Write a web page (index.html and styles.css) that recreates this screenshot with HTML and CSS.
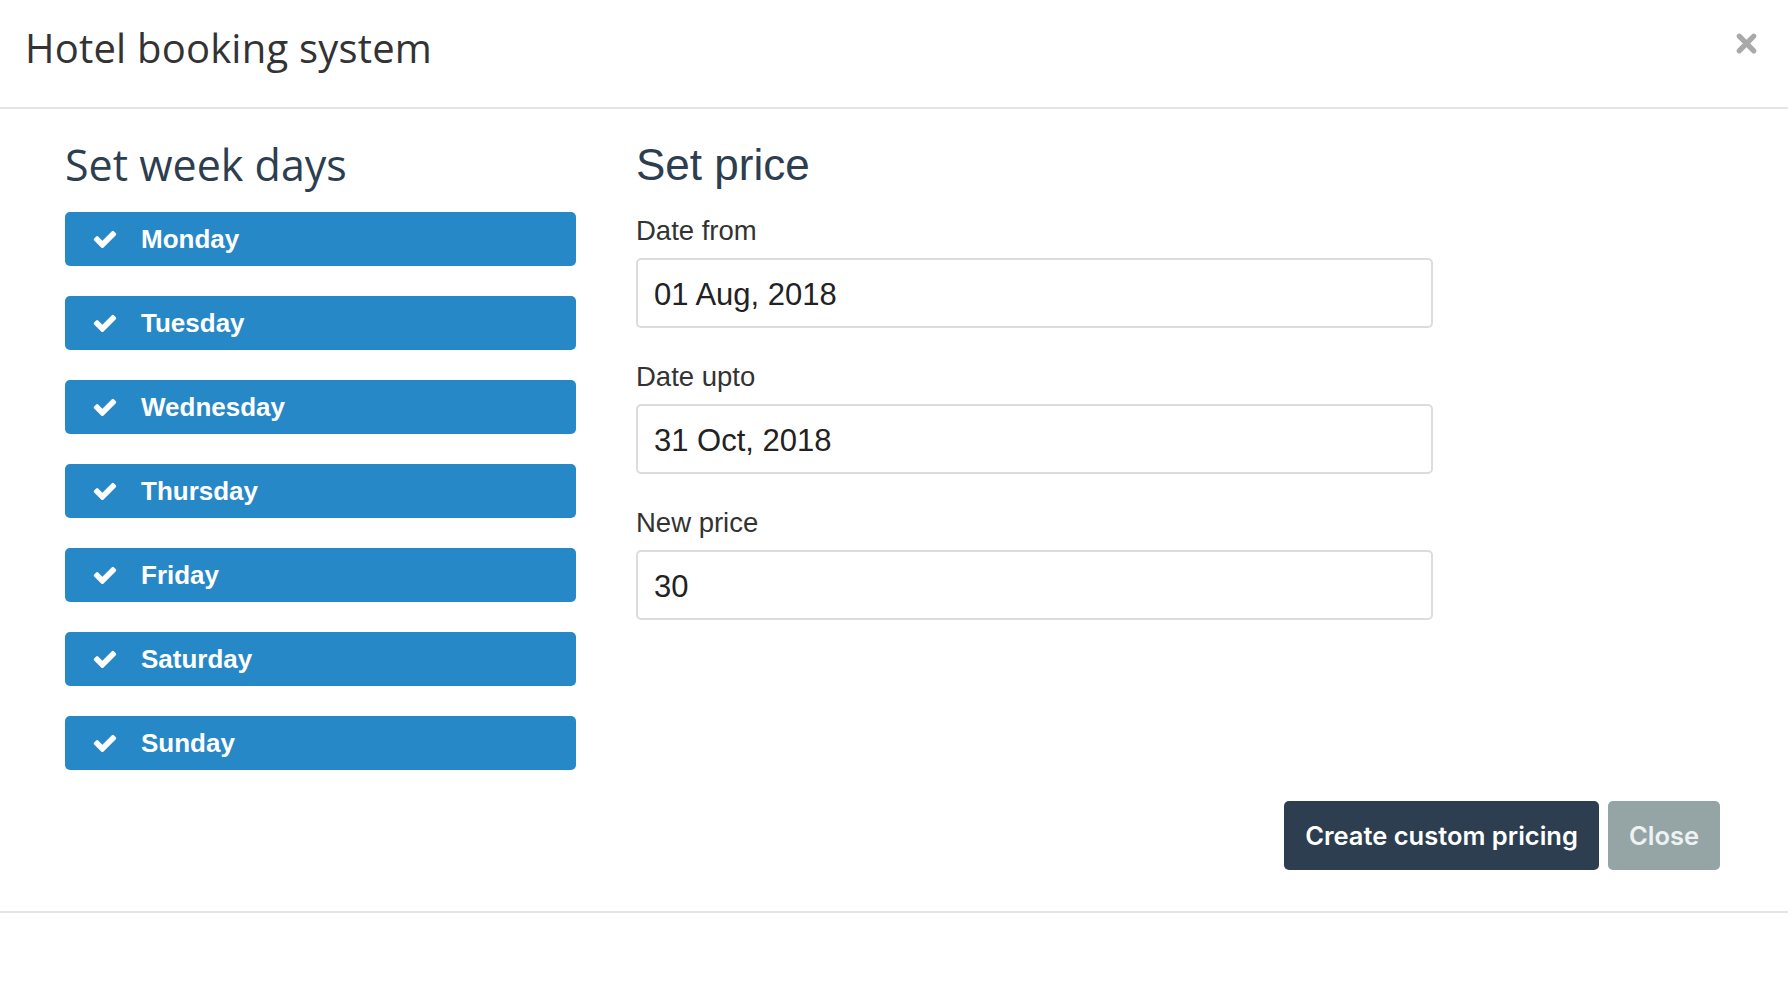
FILE: index.html
```html
<!DOCTYPE html>
<html>
<head>
<meta charset="utf-8">
<link rel="stylesheet" href="styles.css">
</head>
<body>
<div class="modal">
  <div class="modal-header">
    <h1 class="modal-title">Hotel booking system</h1>
    <button class="close-x" aria-label="Close">
      <svg viewBox="0 0 22 22" width="23" height="23"><path d="M4 4 L18 18 M18 4 L4 18" stroke="#a9a9a9" stroke-width="5" stroke-linecap="round"/></svg>
    </button>
  </div>
  <div class="modal-body">
    <div class="columns">
      <div class="col-days">
        <h2 class="section-title poppins">Set week days</h2>
        <div class="day-list">
          <div class="day-btn"><svg class="check" viewBox="0 0 1792 1792"><path d="M1671 566q0 40-28 68l-724 724-136 136q-28 28-68 28t-68-28l-136-136-362-362q-28-28-28-68t28-68l136-136q28-28 68-28t68 28l294 295 656-657q28-28 68-28t68 28l136 136q28 28 28 68z"/></svg><span>Monday</span></div>
          <div class="day-btn"><svg class="check" viewBox="0 0 1792 1792"><path d="M1671 566q0 40-28 68l-724 724-136 136q-28 28-68 28t-68-28l-136-136-362-362q-28-28-28-68t28-68l136-136q28-28 68-28t68 28l294 295 656-657q28-28 68-28t68 28l136 136q28 28 28 68z"/></svg><span>Tuesday</span></div>
          <div class="day-btn"><svg class="check" viewBox="0 0 1792 1792"><path d="M1671 566q0 40-28 68l-724 724-136 136q-28 28-68 28t-68-28l-136-136-362-362q-28-28-28-68t28-68l136-136q28-28 68-28t68 28l294 295 656-657q28-28 68-28t68 28l136 136q28 28 28 68z"/></svg><span>Wednesday</span></div>
          <div class="day-btn"><svg class="check" viewBox="0 0 1792 1792"><path d="M1671 566q0 40-28 68l-724 724-136 136q-28 28-68 28t-68-28l-136-136-362-362q-28-28-28-68t28-68l136-136q28-28 68-28t68 28l294 295 656-657q28-28 68-28t68 28l136 136q28 28 28 68z"/></svg><span>Thursday</span></div>
          <div class="day-btn"><svg class="check" viewBox="0 0 1792 1792"><path d="M1671 566q0 40-28 68l-724 724-136 136q-28 28-68 28t-68-28l-136-136-362-362q-28-28-28-68t28-68l136-136q28-28 68-28t68 28l294 295 656-657q28-28 68-28t68 28l136 136q28 28 28 68z"/></svg><span>Friday</span></div>
          <div class="day-btn"><svg class="check" viewBox="0 0 1792 1792"><path d="M1671 566q0 40-28 68l-724 724-136 136q-28 28-68 28t-68-28l-136-136-362-362q-28-28-28-68t28-68l136-136q28-28 68-28t68 28l294 295 656-657q28-28 68-28t68 28l136 136q28 28 28 68z"/></svg><span>Saturday</span></div>
          <div class="day-btn"><svg class="check" viewBox="0 0 1792 1792"><path d="M1671 566q0 40-28 68l-724 724-136 136q-28 28-68 28t-68-28l-136-136-362-362q-28-28-28-68t28-68l136-136q28-28 68-28t68 28l294 295 656-657q28-28 68-28t68 28l136 136q28 28 28 68z"/></svg><span>Sunday</span></div>
        </div>
      </div>
      <div class="col-price">
        <h2 class="section-title">Set price</h2>
        <div class="field">
          <label class="field-label">Date from</label>
          <div class="field-input">01 Aug, 2018</div>
        </div>
        <div class="field">
          <label class="field-label">Date upto</label>
          <div class="field-input">31 Oct, 2018</div>
        </div>
        <div class="field">
          <label class="field-label">New price</label>
          <div class="field-input">30</div>
        </div>
      </div>
    </div>
    <div class="actions">
      <button class="btn btn-dark">Create custom pricing</button>
      <button class="btn btn-gray">Close</button>
    </div>
  </div>
</div>
</body>
</html>
```

FILE: styles.css
```css
html, body {
  margin: 0;
  padding: 0;
  background: #fff;
}
body {
  font-family: "Liberation Sans", Arial, sans-serif;
  color: #333;
}
.modal {
  width: 100%;
}
.modal-header {
  height: 107px;
  border-bottom: 2px solid #e5e5e5;
  display: flex;
  align-items: center;
  justify-content: space-between;
  padding: 0 30px 0 25px;
  box-sizing: content-box;
}
.modal-title {
  margin: 0 0 12px 0;
  font-family: "Open Sans", sans-serif;
  font-weight: 400;
  font-size: 40px;
  color: #333;
  letter-spacing: 0.2px;
}
.close-x {
  border: 0;
  background: none;
  padding: 0;
  margin-bottom: 20px;
  width: 23px;
  height: 23px;
}
.modal-body {
  padding: 32px 68px 0 65px;
  border-bottom: 2px solid #e5e5e5;
}
.columns {
  display: flex;
  gap: 60px;
}
.col-days {
  width: 511px;
}
.col-price {
  width: 797px;
}
.section-title {
  margin: 0 0 23px 0;
  font-size: 44px;
  line-height: 48px;
  font-weight: 400;
  color: #2c3e50;
}
.poppins {
  font-family: "Open Sans", sans-serif;
  font-size: 43px;
}
.day-list {
  display: flex;
  flex-direction: column;
  gap: 30px;
}
.day-btn {
  height: 54px;
  background: #2788c8;
  border-radius: 5px;
  display: flex;
  align-items: center;
  color: #fff;
  font-weight: 700;
  font-size: 26px;
}
.check {
  width: 26px;
  height: 26px;
  fill: #fff;
  margin-left: 27px;
  margin-right: 23px;
}
.field {
  display: flex;
  flex-direction: column;
  margin-bottom: 30px;
}
.field-label {
  font-size: 27.5px;
  line-height: 34px;
  color: #333;
  margin-top: 2px;
  margin-bottom: 10px;
}
.field-input {
  height: 62px;
  border: 2px solid #dcdcdc;
  border-radius: 5px;
  display: flex;
  align-items: center;
  padding: 4px 0 0 16px;
  font-size: 31px;
  color: #222;
}
.actions {
  display: flex;
  justify-content: flex-end;
  gap: 9px;
  margin-top: 31px;
  padding-bottom: 41px;
}
.btn {
  height: 69px;
  border: 0;
  border-radius: 5px;
  font-family: Inter, sans-serif;
  font-weight: 600;
  font-size: 25.5px;
  color: #fff;
  padding: 0 21px;
}
.btn-dark {
  background: #2c3e50;
}
.btn-gray {
  background: #95a5a6;
  color: #eef2f2;
}
```
